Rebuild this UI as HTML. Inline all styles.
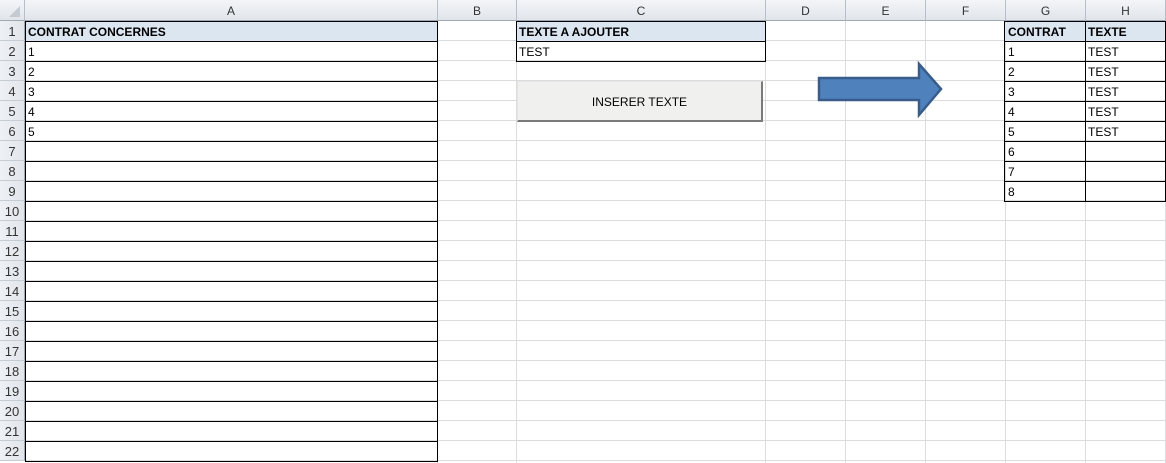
<!DOCTYPE html>
<html><head><meta charset="utf-8"><style>
body{margin:0;width:1166px;height:463px;overflow:hidden;background:#fff;font-family:"Liberation Sans",sans-serif;font-size:12px;position:relative}
div,span{position:absolute;box-sizing:border-box}
.grid{left:25px;top:21px;width:1141px;height:442px;background:repeating-linear-gradient(to bottom,transparent 0 19px,#dadcdd 19px 20px)}
.v{top:21px;height:442px;width:1px;background:#dadcdd}
.hdr{top:0;height:21px;background:linear-gradient(#f3f5f8,#e1e5ea);border-bottom:1px solid #9fa9b5;border-right:1px solid #b5bec9;text-align:center;line-height:22px;color:#333;font-size:12px}
.rh{left:0;width:25px;height:20px;background:linear-gradient(to right,#eef1f5,#e1e5ea);border-right:1px solid #9fa9b5;border-bottom:1px solid #c5ccd4;text-align:center;line-height:21px;color:#333;font-size:13px}
.tb{border:1px solid #000;background:repeating-linear-gradient(to bottom,transparent 0 19px,#000 19px 20px)}
.t{line-height:22px;height:20px;color:#000;white-space:nowrap}
.b{font-weight:bold}
.fill{background:#dce6f1}
</style></head><body>
<div class="grid"></div>
<div class="v" style="left:437px"></div><div class="v" style="left:516px"></div><div class="v" style="left:765px"></div><div class="v" style="left:845px"></div><div class="v" style="left:925px"></div><div class="v" style="left:1005px"></div><div class="v" style="left:1085px"></div><div class="v" style="left:1165px"></div>

<div class="hdr" style="left:0;width:25px"><svg width="24" height="20" style="position:absolute;left:0;top:0"><polygon points="20,6 20,17 9,17" fill="#c5cad1"/></svg></div>
<div class="hdr" style="left:25px;width:413px">A</div>
<div class="hdr" style="left:438px;width:79px">B</div>
<div class="hdr" style="left:517px;width:249px">C</div>
<div class="hdr" style="left:766px;width:80px">D</div>
<div class="hdr" style="left:846px;width:80px">E</div>
<div class="hdr" style="left:926px;width:80px">F</div>
<div class="hdr" style="left:1006px;width:80px">G</div>
<div class="hdr" style="left:1086px;width:80px">H</div>

<div class="rh" style="top:21px">1</div><div class="rh" style="top:41px">2</div><div class="rh" style="top:61px">3</div><div class="rh" style="top:81px">4</div><div class="rh" style="top:101px">5</div><div class="rh" style="top:121px">6</div><div class="rh" style="top:141px">7</div><div class="rh" style="top:161px">8</div><div class="rh" style="top:181px">9</div><div class="rh" style="top:201px">10</div><div class="rh" style="top:221px">11</div><div class="rh" style="top:241px">12</div><div class="rh" style="top:261px">13</div><div class="rh" style="top:281px">14</div><div class="rh" style="top:301px">15</div><div class="rh" style="top:321px">16</div><div class="rh" style="top:341px">17</div><div class="rh" style="top:361px">18</div><div class="rh" style="top:381px">19</div><div class="rh" style="top:401px">20</div><div class="rh" style="top:421px">21</div><div class="rh" style="top:441px">22</div>

<div class="fill" style="left:25px;top:21px;width:412px;height:20px"></div>
<div class="fill" style="left:516px;top:21px;width:249px;height:20px"></div>
<div class="fill" style="left:1005px;top:21px;width:160px;height:20px"></div>

<div class="tb" style="left:25px;top:21px;width:413px;height:441px"></div>
<div class="tb" style="left:516px;top:21px;width:250px;height:41px"></div>
<div class="tb" style="left:1004px;top:21px;width:162px;height:181px"></div>
<div style="left:1085px;top:21px;width:1px;height:180px;background:#000"></div>

<span class="t b" style="left:28px;top:21px">CONTRAT CONCERNES</span>
<span class="t" style="left:28px;top:41px">1</span>
<span class="t" style="left:28px;top:61px">2</span>
<span class="t" style="left:28px;top:81px">3</span>
<span class="t" style="left:28px;top:101px">4</span>
<span class="t" style="left:28px;top:121px">5</span>

<span class="t b" style="left:519px;top:21px">TEXTE A AJOUTER</span>
<span class="t" style="left:519px;top:41px">TEST</span>

<div style="left:517px;top:81px;width:246px;height:41px;background:#f0f0ee;border-right:2px solid #7a7a7a;border-bottom:2px solid #7a7a7a;border-top:1px solid #e4e4e4;border-left:1px solid #e4e4e4;text-align:center;line-height:40px">INSERER TEXTE</div>

<svg style="position:absolute;left:815px;top:60px" width="130" height="60"><polygon points="4,18 104,18 104,4 126,29 104,55 104,40 4,40" fill="#4f81bd" stroke="#385d8a" stroke-width="2.5"/></svg>

<span class="t b" style="left:1008px;top:21px">CONTRAT</span>
<span class="t b" style="left:1088px;top:21px">TEXTE</span>
<span class="t" style="left:1008px;top:41px">1</span><span class="t" style="left:1088px;top:41px">TEST</span>
<span class="t" style="left:1008px;top:61px">2</span><span class="t" style="left:1088px;top:61px">TEST</span>
<span class="t" style="left:1008px;top:81px">3</span><span class="t" style="left:1088px;top:81px">TEST</span>
<span class="t" style="left:1008px;top:101px">4</span><span class="t" style="left:1088px;top:101px">TEST</span>
<span class="t" style="left:1008px;top:121px">5</span><span class="t" style="left:1088px;top:121px">TEST</span>
<span class="t" style="left:1008px;top:141px">6</span>
<span class="t" style="left:1008px;top:161px">7</span>
<span class="t" style="left:1008px;top:181px">8</span>
</body></html>
